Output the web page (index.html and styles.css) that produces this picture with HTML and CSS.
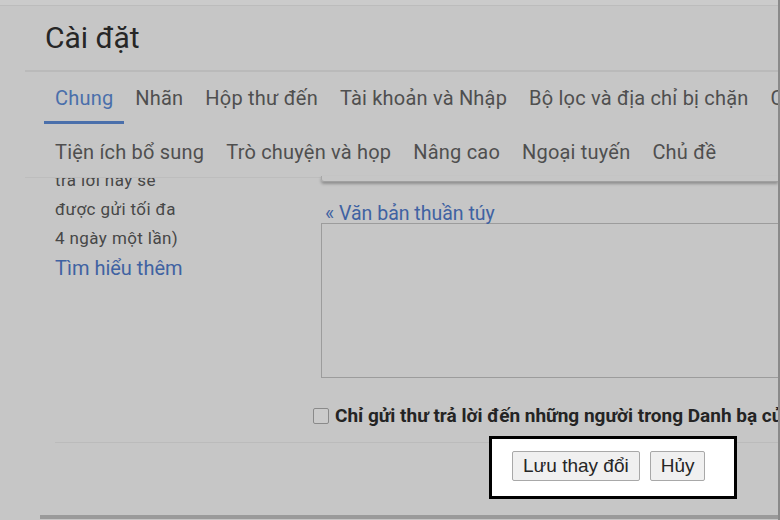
FILE: index.html
```html
<!DOCTYPE html>
<html lang="vi">
<head>
  <meta charset="UTF-8">
  <meta name="viewport" content="width=device-width, initial-scale=1.0">
  <title>Cài đặt</title>
  <link rel="stylesheet" href="styles.css">
</head>
<body>

<div class="frame">
  <div class="topbar"></div>
  <h1 class="title">Cài đặt</h1>
  <div class="title-rule"></div>

  <nav class="tabs">
    <div class="tab-row">
      <a class="tab active">Chung</a>
      <a class="tab">Nhãn</a>
      <a class="tab">Hộp thư đến</a>
      <a class="tab">Tài khoản và Nhập</a>
      <a class="tab">Bộ lọc và địa chỉ bị chặn</a>
      <a class="tab">Chuyển tiếp và POP/IMAP</a>
    </div>
    <div class="tab-row second">
      <a class="tab">Tiện ích bổ sung</a>
      <a class="tab">Trò chuyện và họp</a>
      <a class="tab">Nâng cao</a>
      <a class="tab">Ngoại tuyến</a>
      <a class="tab">Chủ đề</a>
    </div>
  </nav>

  <div class="content">
    <div class="hint">
      <p class="hint-line">trả lời này sẽ</p>
      <p class="hint-line">được gửi tối đa</p>
      <p class="hint-line">4 ngày một lần)</p>
      <a class="hint-link">Tìm hiểu thêm</a>
    </div>
    <div class="editor">
      <div class="toolbar-edge"></div>
      <a class="plain-text">« Văn bản thuần túy</a>
      <div class="message-box"></div>
    </div>
  </div>

  <label class="contacts-only">
    <span class="checkbox"></span>
    <span class="contacts-label">Chỉ gửi thư trả lời đến những người trong Danh bạ của tôi</span>
  </label>

  <div class="actions">
    <button class="btn">Lưu thay đổi</button>
    <button class="btn">Hủy</button>
  </div>

  <div class="bottom-edge"></div>
</div>

</body>
</html>
```

FILE: styles.css
```css
body {
    margin: 0;
    padding: 0;
    background-color: #c6c6c6;
    font-family: Roboto, "Noto Sans", sans-serif;
}

.frame {
    width: 778px;
    height: 520px;
    overflow: hidden;
    border-right: 2px solid #8a8a8a;
}

.topbar {
    height: 5px;
    background-color: #cbcbcb;
    border-bottom: 1px solid #bcbcbc;
}

.title {
    margin: 0;
    padding: 14px 0 0 45px;
    font-size: 30px;
    line-height: 36px;
    font-weight: 400;
    color: #262626;
}

.title-rule {
    margin: 14px 0 0 25px;
    height: 2px;
    background-color: #bababa;
}

/* tab strip, two rows */
.tabs {
    padding-left: 44px;
}

.tab-row {
    display: flex;
    white-space: nowrap;
}

.tab {
    flex-shrink: 0;
    padding: 14px 11px 11px;
    font-size: 20px;
    line-height: 24px;
    color: #4f4f4f;
    border-bottom: 3px solid transparent;
    letter-spacing: 0.2px;
}

.tab.active {
    color: #4a6fab;
    border-bottom-color: #4a6fab;
    border-radius: 2px 2px 0 0;
}

.tab-row.second .tab {
    padding: 16px 11px 13px;
    border-bottom: none;
}

/* hint column + editor */
.content {
    display: flex;
    margin-left: 25px;
    height: 201px;
}

.hint {
    width: 266px;
    flex-shrink: 0;
    padding-left: 30px;
    overflow: hidden;
    border-top: 1px solid #bdbdbd;
}

.hint-line {
    margin: 0;
    font-size: 17px;
    line-height: 29px;
    color: #474747;
    letter-spacing: 0.4px;
}

.hint-line:first-child {
    margin-top: -12px;
}

.hint-link {
    display: block;
    font-size: 20px;
    line-height: 30px;
    color: #3f62a2;
}

.editor {
    flex: 1;
    min-width: 0;
}

.toolbar-edge {
    height: 5px;
    margin-top: -1px;
    border-left: 1px solid #a8a8a8;
    border-bottom: 1px solid #a0a0a0;
    border-bottom-left-radius: 3px;
    box-shadow: 0 2px 3px rgba(0, 0, 0, 0.28);
}

.plain-text {
    display: block;
    margin: 22px 0 0 4px;
    font-size: 19.5px;
    line-height: 20px;
    color: #3f62a2;
    white-space: nowrap;
}

.message-box {
    margin-top: -1px;
    width: 520px;
    height: 153px;
    border: 1px solid #9c9c9c;
}

/* reply option */
.contacts-only {
    display: flex;
    align-items: center;
    gap: 6px;
    margin: 26px 0 0 55px;
    padding: 0 0 14px 258px;
    border-bottom: 1px solid #bbbbbb;
    white-space: nowrap;
}

.checkbox {
    flex-shrink: 0;
    width: 14px;
    height: 14px;
    border: 1px solid #8a8a8a;
    border-radius: 2px;
    background-color: #cbcbcb;
}

.contacts-label {
    font-size: 19px;
    line-height: 24px;
    font-weight: 700;
    color: #242424;
}

/* save / cancel, boxed */
.actions {
    display: flex;
    gap: 10px;
    box-sizing: border-box;
    width: 248px;
    height: 63px;
    margin: -7px 0 0 489px;
    padding: 12px 0 0 20px;
    background-color: #ffffff;
    border: 3px solid #000000;
}

.btn {
    height: 30px;
    padding: 0 10px;
    border: 1px solid #a8a8a8;
    border-radius: 2px;
    background-color: #f0f0f0;
    font-family: "Liberation Sans", Arial, sans-serif;
    font-size: 19px;
    color: #262626;
}

.bottom-edge {
    margin: 16px 0 0 40px;
    height: 4px;
    background-color: #9a9a9a;
}
```
